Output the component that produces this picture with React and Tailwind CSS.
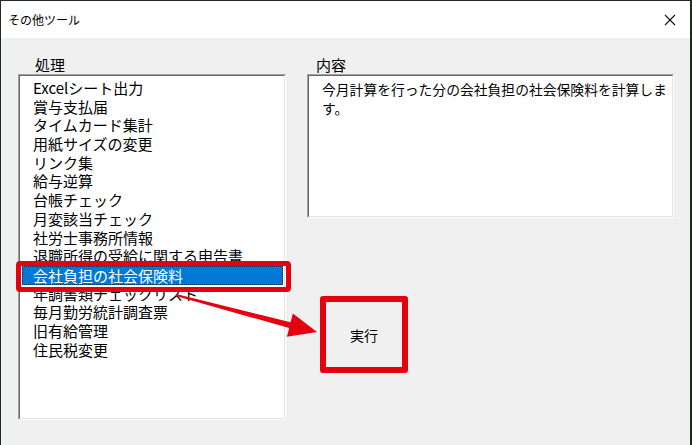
import React from "react";

const items = [
  "Excelシート出力",
  "賞与支払届",
  "タイムカード集計",
  "用紙サイズの変更",
  "リンク集",
  "給与逆算",
  "台帳チェック",
  "月変該当チェック",
  "社労士事務所情報",
  "退職所得の受給に関する申告書",
  "会社負担の社会保険料",
  "年調書類チェックリスト",
  "毎月勤労統計調査票",
  "旧有給管理",
  "住民税変更",
];

const SELECTED = 10;

const font = { fontFamily: '"Noto Sans CJK JP", "Noto Sans", sans-serif' };

const App = () => {
  return (
    <div
      className="relative w-[692px] h-[445px] overflow-hidden bg-[#f0f0f0] border-t border-l border-r-2 border-[#1f2b22] text-black"
      style={font}
    >
      {/* Title bar */}
      <div className="h-[37px] bg-white flex items-center justify-between pl-[7px] pr-[14px]">
        <span className="text-[12px] leading-none">その他ツール</span>
        <svg width="12" height="12" viewBox="0 0 12 12" className="mt-[1px]">
          <path d="M1 1 L11 11 M11 1 L1 11" stroke="#111" strokeWidth="1.1" fill="none" />
        </svg>
      </div>

      {/* Body */}
      <div className="flex pt-[18px] pl-[17px]">
        {/* Left column */}
        <div className="w-[268px] flex flex-col">
          <div className="pl-[17px] text-[15px] leading-[18px] h-[18px]">処理</div>
          <div className="h-[346px] border-t border-l border-[#a0a0a0] border-b-white border-r-white border-b border-r">
            <div className="h-full bg-white border-t border-l border-[#696969] border-b-[#e3e3e3] border-r-[#e3e3e3] border-b border-r pt-[3px] pl-[2px] pr-[1px]">
              {items.map((item, i) => (
                <div
                  key={i}
                  className={
                    i === SELECTED
                      ? "h-[18.7px] pl-[10px] text-[15px] leading-[17px] whitespace-nowrap bg-[#0078d7] text-white border border-dotted border-[#222]"
                      : "h-[18.7px] pl-[11px] text-[15px] leading-[18.7px] whitespace-nowrap"
                  }
                >
                  {item}
                </div>
              ))}
            </div>
          </div>
        </div>

        {/* Right column */}
        <div className="ml-[21px] w-[367px] flex flex-col">
          <div className="pl-[9px] text-[15px] leading-[18px] h-[18px]">内容</div>
          <div className="h-[144px] border-t border-l border-[#a0a0a0] border-b-white border-r-white border-b border-r">
            <div className="h-full bg-white border-t border-l border-[#696969] border-b-[#e3e3e3] border-r-[#e3e3e3] border-b border-r pt-[4px] pl-[13px] text-[13.8px] leading-[19px] whitespace-nowrap">
              今月計算を行った分の会社負担の社会保険料を計算しま
              <br />
              す。
            </div>
          </div>

          {/* Execute button */}
          <div className="mt-[78px] ml-[13px] w-[88px] h-[77px] flex items-center justify-center rounded-[3px] border-[6px] border-[#e5000f] bg-[#f0f0f0]">
            <span className="text-[14px] leading-none">実行</span>
          </div>
        </div>
      </div>

      {/* Red highlight around selected item */}
      <div className="absolute left-[15px] top-[260px] w-[275px] h-[31px] rounded-[4px] border-[5px] border-[#e5000f] pointer-events-none" />

      {/* Arrow */}
      <svg className="absolute left-0 top-0 pointer-events-none" width="692" height="445">
        <polygon
          points="174.8,295 175.2,293 289.6,321.2 291.9,312.5 316,331 285.9,335.7 288.2,327"
          fill="#e5000f"
        />
      </svg>
    </div>
  );
};

export default App;
